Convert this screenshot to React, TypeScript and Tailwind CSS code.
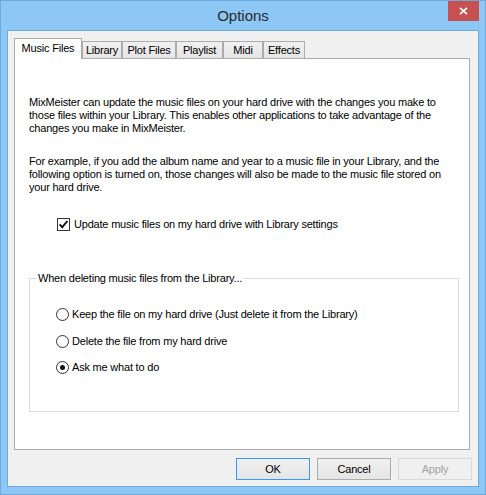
import React from "react";

const tabs = [
  { label: "Music Files", w: "w-[68px]", selected: true },
  { label: "Library", w: "w-[40px]" },
  { label: "Plot Files", w: "w-[54px]" },
  { label: "Playlist", w: "w-[47px]" },
  { label: "Midi", w: "w-[40px]" },
  { label: "Effects", w: "w-[42px]" },
];

function Checkbox({ checked }: { checked: boolean }) {
  return (
    <span className="w-[13px] h-[13px] border border-[#333333] bg-white flex items-center justify-center shrink-0">
      {checked && (
        <svg width="11" height="11" viewBox="0 0 11 11">
          <path d="M1.6 5.4 L4.2 8.2 L9.4 2" fill="none" stroke="#111" strokeWidth="1.9" />
        </svg>
      )}
    </span>
  );
}

function Radio({ checked }: { checked: boolean }) {
  return (
    <span className="w-[13px] h-[13px] rounded-full border border-[#333333] bg-white flex items-center justify-center shrink-0">
      {checked && <span className="w-[5px] h-[5px] rounded-full bg-[#111]" />}
    </span>
  );
}

function Button({ label, kind }: { label: string; kind: "default" | "normal" | "disabled" }) {
  const cls =
    kind === "default"
      ? "border-[#3399ff] bg-gradient-to-b from-[#f0f0f0] to-[#e5e5e5] text-black"
      : kind === "normal"
      ? "border-[#acacac] bg-gradient-to-b from-[#f0f0f0] to-[#e5e5e5] text-black"
      : "border-[#d9d9d9] bg-[#f0f0f0] text-[#a3a3a3]";
  return (
    <div className={`w-[74px] h-[22px] border flex items-center justify-center ${cls}`}>{label}</div>
  );
}

export default function App() {
  return (
    <div className="w-[486px] h-[495px] bg-[#8cc7f6] border border-[#6fa9de] flex flex-col font-['Liberation_Sans',Arial,sans-serif] text-[11px] tracking-[-0.2px] text-black">
      {/* Title bar */}
      <div className="h-[29px] grid grid-cols-[1fr_auto_1fr] shrink-0">
        <div />
        <div className="self-center text-[15px] tracking-normal text-[#2b2b2b] leading-[20px] pt-[1px]">Options</div>
        <div className="flex justify-end pr-[6px]">
          <div className="w-[31px] h-[20px] bg-[#c75050] flex items-center justify-center">
            <svg width="9" height="8" viewBox="0 0 9 8">
              <path d="M1 0.8 L8 7.2 M8 0.8 L1 7.2" stroke="#ffffff" strokeWidth="1.7" fill="none" />
            </svg>
          </div>
        </div>
      </div>

      {/* Client area */}
      <div className="mx-[6px] h-[457px] border border-[#6fa9de] bg-[#f0f0f0] flex flex-col">
        <div className="pt-[7px] pl-[6px] pr-[8px] flex flex-col">
          {/* Tab strip */}
          <div className="h-[20px] flex items-end">
            {tabs.map((t) =>
              t.selected ? (
                <div
                  key={t.label}
                  className={`${t.w} h-[21px] -mb-px relative z-10 bg-white border-t border-l border-r border-[#acacac] flex items-center justify-center pb-[2px]`}
                >
                  {t.label}
                </div>
              ) : (
                <div
                  key={t.label}
                  className={`${t.w} h-[17px] border-t border-l border-r border-[#acacac] bg-gradient-to-b from-[#f0f0f0] to-[#e5e5e5] flex items-center justify-center`}
                >
                  {t.label}
                </div>
              )
            )}
          </div>

          {/* Panel */}
          <div className="w-[456px] h-[392px] border border-[#acacac] bg-white">
            <div className="pt-[37px] pl-[14px] flex flex-col">
              <p className="leading-[13px] whitespace-nowrap">
                MixMeister can update the music files on your hard drive with the changes you make to
                <br />
                those files within your Library. This enables other applications to take advantage of the
                <br />
                changes you make in MixMeister.
              </p>
              <p className="mt-[20px] leading-[13px] whitespace-nowrap">
                For example, if you add the album name and year to a music file in your Library, and the
                <br />
                following option is turned on, those changes will also be made to the music file stored on
                <br />
                your hard drive.
              </p>
              <div className="mt-[24px] ml-[28px] h-[13px] flex items-center gap-[4px] whitespace-nowrap">
                <Checkbox checked />
                <span className="leading-[13px]">Update music files on my hard drive with Library settings</span>
              </div>

              <fieldset className="mt-[41px] w-[430px] border border-[#dcdcdc] p-0 m-0">
                <legend className="ml-[7px] px-[1px] leading-[13px] whitespace-nowrap">
                  When deleting music files from the Library...
                </legend>
                <div className="pt-[23px] pb-[37px] pl-[26px] flex flex-col">
                  <div className="h-[13px] flex items-center gap-[3px] whitespace-nowrap">
                    <Radio checked={false} />
                    <span className="leading-[13px]">Keep the file on my hard drive (Just delete it from the Library)</span>
                  </div>
                  <div className="mt-[14px] h-[13px] flex items-center gap-[3px] whitespace-nowrap">
                    <Radio checked={false} />
                    <span className="leading-[13px]">Delete the file from my hard drive</span>
                  </div>
                  <div className="mt-[13px] h-[13px] flex items-center gap-[3px] whitespace-nowrap">
                    <Radio checked />
                    <span className="leading-[13px]">Ask me what to do</span>
                  </div>
                </div>
              </fieldset>
            </div>
          </div>
        </div>

        {/* Buttons */}
        <div className="mt-[8px] pr-[6px] flex justify-end gap-[7px]">
          <Button label="OK" kind="default" />
          <Button label="Cancel" kind="normal" />
          <Button label="Apply" kind="disabled" />
        </div>
      </div>
    </div>
  );
}
